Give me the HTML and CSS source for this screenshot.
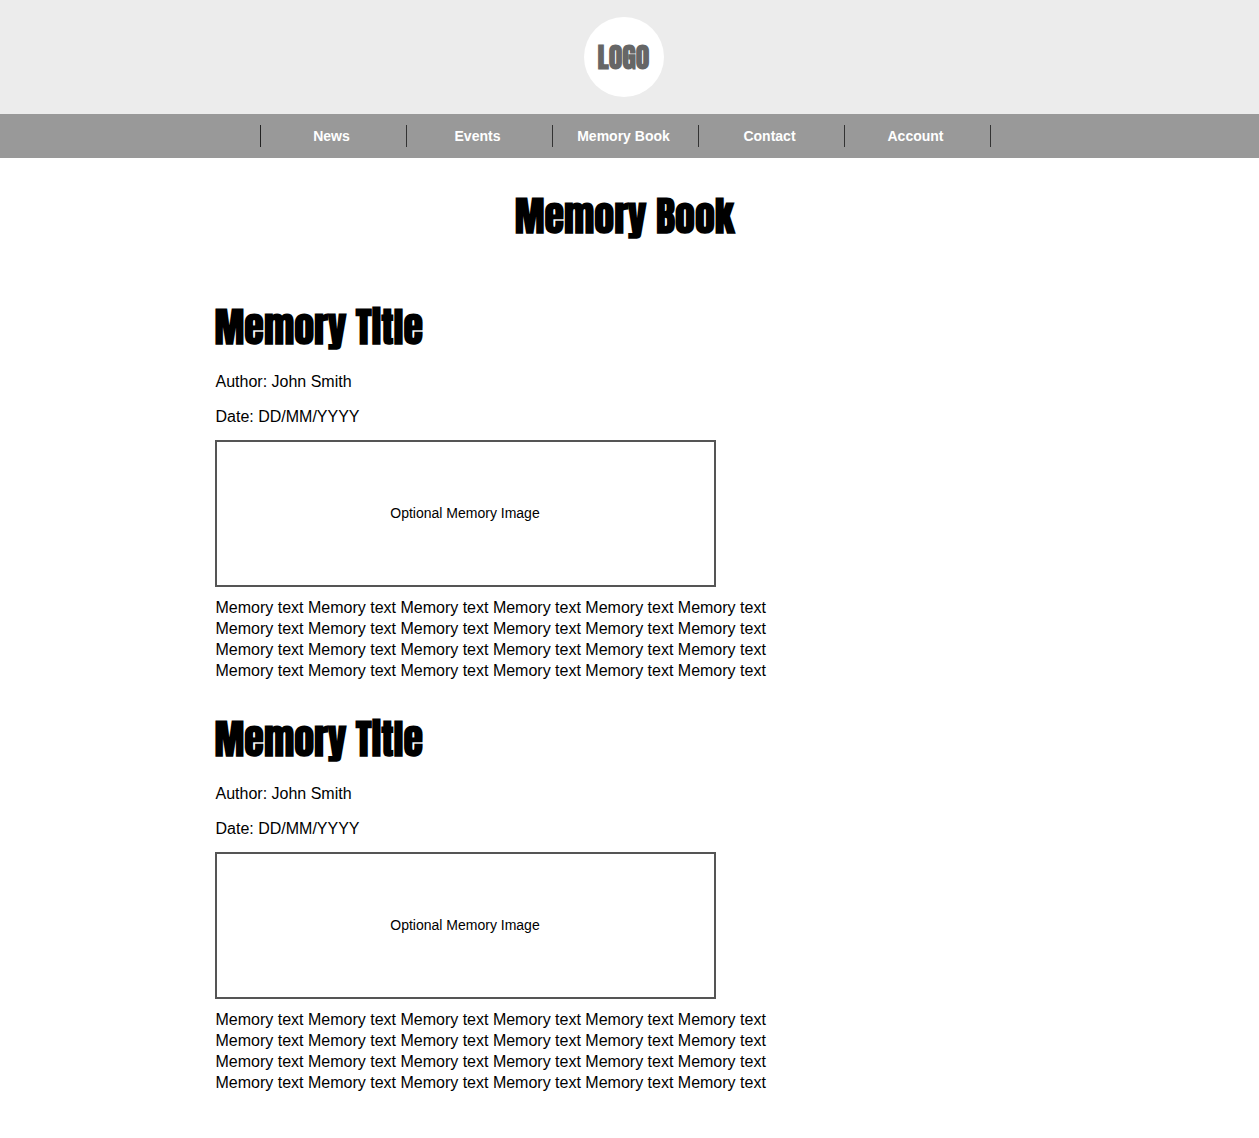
FILE: index.html
```html
<!DOCTYPE html>
<html lang="en">
<head>
<meta charset="utf-8">
<meta name="viewport" content="width=device-width, initial-scale=1">
<title>Memory Book</title>
<link rel="stylesheet" href="styles.css">
</head>
<body>
<header class="banner"><a class="logo" href="#">LOGO</a></header>
<nav class="nav">
  <ul class="nav-list">
    <li><a href="#">News</a></li>
    <li><a href="#">Events</a></li>
    <li><a href="#">Memory Book</a></li>
    <li><a href="#">Contact</a></li>
    <li><a href="#">Account</a></li>
  </ul>
</nav>
<main class="page">
  <h1>Memory Book</h1>
  <div class="memories">
    <article class="memory">
      <h2>Memory Title</h2>
      <p class="meta">Author: John Smith</p>
      <p class="meta">Date: DD/MM/YYYY</p>
      <div class="image">Optional Memory Image</div>
      <p class="text">Memory text Memory text Memory text Memory text Memory text Memory text<br>Memory text Memory text Memory text Memory text Memory text Memory text<br>Memory text Memory text Memory text Memory text Memory text Memory text<br>Memory text Memory text Memory text Memory text Memory text Memory text</p>
    </article>
    <article class="memory">
      <h2>Memory Title</h2>
      <p class="meta">Author: John Smith</p>
      <p class="meta">Date: DD/MM/YYYY</p>
      <div class="image">Optional Memory Image</div>
      <p class="text">Memory text Memory text Memory text Memory text Memory text Memory text<br>Memory text Memory text Memory text Memory text Memory text Memory text<br>Memory text Memory text Memory text Memory text Memory text Memory text<br>Memory text Memory text Memory text Memory text Memory text Memory text</p>
    </article>
  </div>
</main>
</body>
</html>
```
FILE: styles.css
```css
* { box-sizing: border-box; }

body {
  margin: 0;
  background: #fff;
  color: #000;
  font: 16px/21px Arial, "Liberation Sans", sans-serif;
}

h1, h2, p, ul { margin: 0; padding: 0; }

a { color: inherit; text-decoration: none; }

h1, h2, .logo {
  font-family: Impact, Anton, "Roboto Condensed", sans-serif;
  font-weight: 700;
}

h1, h2 {
  font-size: 40px;
  line-height: 48px;
}

.banner {
  display: flex;
  justify-content: center;
  padding: 17px 12px 17px 0;
  background: #ececec;
}

.logo {
  display: flex;
  align-items: center;
  justify-content: center;
  width: 80px;
  height: 80px;
  border-radius: 50%;
  background: #fff;
  color: #666;
  font-size: 28px;
}

.nav {
  padding: 11px 9px 11px 0;
  background: #999;
}

.nav-list {
  display: flex;
  width: 100%;
  max-width: 731px;
  margin: 0 auto;
  list-style: none;
  border-left: 1px solid #222;
}

.nav-list li {
  flex: 1;
  border-right: 1px solid #333;
  color: #fff;
  font-size: 14px;
  font-weight: 700;
  line-height: 22px;
  text-align: center;
}

.nav-list a { display: block; padding-right: 3px; }

.page { padding: 34px 10px 46px 0; }

h1 { margin-bottom: 63px; text-align: center; }

.memories {
  display: flex;
  flex-direction: column;
  gap: 34px;
  width: 100%;
  max-width: 820px;
  margin: 0 auto;
}

h2 { margin-bottom: 20px; }

.meta { margin-bottom: 14px; padding-left: 1px; }

.meta + .meta { margin-bottom: 13px; }

.image {
  display: flex;
  align-items: center;
  justify-content: center;
  max-width: 501px;
  height: 147px;
  margin-bottom: 10px;
  border: 2px solid #555;
  font-size: 14px;
}

.text { padding-left: 1px; }
```
